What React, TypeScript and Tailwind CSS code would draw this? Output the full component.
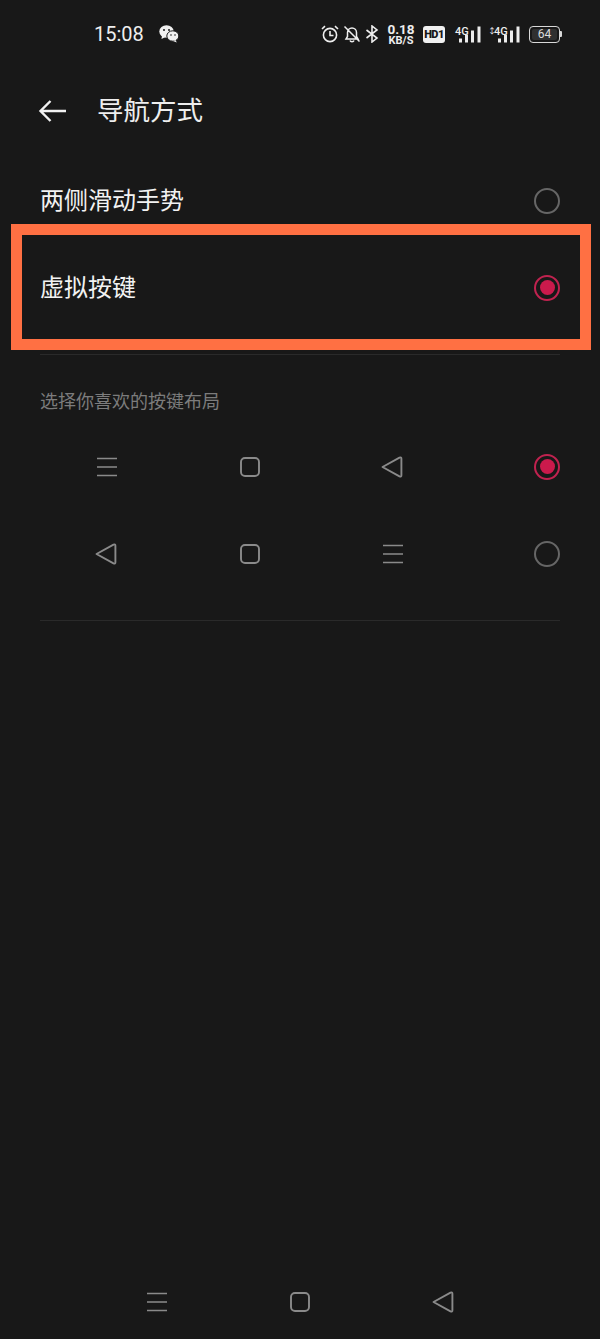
const MenuIcon = () => (
  <svg width="20" height="20" viewBox="0 0 20 20" fill="none" stroke="#8a8a8a" strokeWidth="1.7">
    <path d="M0 1.5H20M0 10H20M0 18.5H20" />
  </svg>
);
const SquareIcon = () => (
  <svg width="20" height="20" viewBox="0 0 20 20" fill="none" stroke="#8a8a8a" strokeWidth="1.9">
    <rect x="1" y="1" width="18" height="18" rx="4" />
  </svg>
);
const BackIcon = ({ className = "" }: { className?: string }) => (
  <svg className={className} width="22" height="22" viewBox="0 0 22 22" fill="none" stroke="#8a8a8a" strokeWidth="1.9" strokeLinejoin="round">
    <path d="M1.5 11L18.5 1.6Q20.4 0.9 20.4 2.8V19.2Q20.4 21.1 18.5 20.4Z" />
  </svg>
);
const Radio = ({ on }: { on?: boolean }) =>
  on ? (
    <div className="flex h-[26px] w-[26px] shrink-0 items-center justify-center rounded-full border-[2.5px] border-[#c0224f]">
      <div className="h-[15px] w-[15px] rounded-full bg-[#cb1a4c]" />
    </div>
  ) : (
    <div className="h-[26px] w-[26px] shrink-0 rounded-full border-[2.5px] border-[#666666]" />
  );
const Bars = () => (
  <svg width="22" height="21" viewBox="0 0 22 21" fill="#ececec">
    <rect x="0" y="14.5" width="3" height="4" />
    <rect x="6" y="10.5" width="3" height="8" />
    <rect x="12" y="6.5" width="3" height="12" />
    <rect x="18.5" y="2.5" width="3" height="16" />
  </svg>
);

const ROW = "flex items-center pl-[40px] pr-[40px]";

export default function App() {
  return (
    <div className="relative flex h-[1339px] w-[600px] flex-col overflow-hidden bg-[#181818] font-['Noto_Sans_CJK_SC','Noto_Sans',sans-serif] text-white">
      {/* status bar */}
      <div className="flex h-[68px] items-center pl-[94px] pr-[38px] text-[#eeeeee]">
        <span className="font-['Roboto',sans-serif] text-[20px] leading-none">15:08</span>
        <svg className="ml-[15px]" width="20" height="18" viewBox="0 0 20 18" fill="#f0f0f0">
          <ellipse cx="7.5" cy="6.5" rx="7.2" ry="6.2" />
          <path d="M3 10.5L2.5 14L6.5 12Z" />
          <ellipse cx="13.8" cy="11" rx="6" ry="5.2" stroke="#181818" strokeWidth="1" />
          <path d="M16.5 15L17.8 17.5L14 16Z" />
          <circle cx="5" cy="5" r="1" fill="#181818" />
          <circle cx="10" cy="5" r="1" fill="#181818" />
          <circle cx="12" cy="10" r="0.8" fill="#181818" />
          <circle cx="16" cy="10" r="0.8" fill="#181818" />
        </svg>
        <div className="ml-auto flex items-center">
          <svg width="18" height="18" viewBox="0 0 18 18" fill="none" stroke="#eee" strokeWidth="1.6">
            <circle cx="9" cy="10" r="6.6" />
            <path d="M9 6V10.5H12.5M1 4L4 1.2M17 4L14 1.2" />
          </svg>
          <svg className="ml-[4px]" width="18" height="18" viewBox="0 0 18 18" fill="none" stroke="#eee" strokeWidth="1.5">
            <path d="M3 14H15L13.5 11.5V7.5C13.5 5 11.5 3 9 3C6.5 3 4.5 5 4.5 7.5V11.5ZM7 15.5C7.5 17 10.5 17 11 15.5M1.5 1.5L16.5 16.5" />
          </svg>
          <svg className="ml-[4px]" width="14" height="18" viewBox="0 0 14 18" fill="none" stroke="#eee" strokeWidth="1.6">
            <path d="M1.5 5L12 13L7 17V1L12 5L1.5 13" />
          </svg>
          <div className="ml-[9px] flex w-[26px] flex-col items-center font-['Roboto',sans-serif] font-bold leading-none">
            <span className="text-[13.5px] leading-[12px]">0.18</span>
            <span className="mt-[1px] text-[11px] leading-[10px]">KB/S</span>
          </div>
          <div className="ml-[9px] flex h-[17px] w-[22px] items-center justify-center rounded-[3px] bg-[#f0f0f0] font-['Roboto',sans-serif] text-[11px] font-black leading-none tracking-[-0.5px] text-[#181818]">
            HD1
          </div>
          <div className="relative ml-[10px] h-[21px] w-[26px]">
            <span className="absolute left-0 top-[2px] font-['Roboto',sans-serif] text-[11px] font-medium leading-none">4G</span>
            <div className="absolute right-0 top-0"><Bars /></div>
          </div>
          <div className="relative ml-[7px] h-[21px] w-[32px]">
            <span className="absolute left-0 top-[3px] text-[8px] leading-none">↕</span>
            <span className="absolute left-[6px] top-[2px] font-['Roboto',sans-serif] text-[11px] font-medium leading-none">4G</span>
            <div className="absolute right-0 top-0"><Bars /></div>
          </div>
          <div className="ml-[9px] flex items-center">
            <div className="flex h-[17px] w-[31px] items-center justify-center rounded-[4px] border-[1.5px] border-[#d8d8d8]">
              <div className="flex h-[11px] w-[25px] items-center justify-center rounded-[2px] bg-[#303030] font-['Roboto',sans-serif] text-[12px] leading-none text-[#dddddd]">
                64
              </div>
            </div>
            <div className="h-[6px] w-[2px] rounded-r-[1px] bg-[#d8d8d8]" />
          </div>
        </div>
      </div>

      {/* header */}
      <div className="flex h-[86px] items-center pl-[38px]">
        <svg width="29" height="24" viewBox="0 0 29 24" fill="none" stroke="#f2f2f2" strokeWidth="2.4">
          <path d="M28 12H3M12.5 2L2.5 12L12.5 22" />
        </svg>
        <span className="ml-[30px] pb-[3px] text-[26.5px] leading-none text-[#eeeeee]">导航方式</span>
      </div>

      {/* mode options */}
      <div className={`${ROW} mt-[3px] h-[87px] justify-between`}>
        <span className="pb-[3px] text-[24px] leading-none text-[#f2f2f2]">两侧滑动手势</span>
        <Radio />
      </div>
      <div className={`${ROW} h-[87px] justify-between`}>
        <span className="pb-[3px] text-[24px] leading-none text-[#f2f2f2]">虚拟按键</span>
        <Radio on />
      </div>

      <div className="mx-[40px] mt-[23px] h-px bg-[#2a2a2a]" />

      <div className="mt-[35px] pl-[40px] text-[18px] leading-[20px] text-[#7c7c7c]">选择你喜欢的按键布局</div>

      {/* layouts */}
      <div className={`${ROW} mt-[13px] h-[87px]`}>
        <div className="ml-[57px] flex items-center gap-[123px]">
          <MenuIcon />
          <SquareIcon />
          <BackIcon className="-ml-[2px]" />
        </div>
        <div className="ml-auto"><Radio on /></div>
      </div>
      <div className={`${ROW} h-[87px]`}>
        <div className="ml-[55px] flex items-center gap-[123px]">
          <BackIcon />
          <SquareIcon />
          <MenuIcon />
        </div>
        <div className="ml-auto"><Radio /></div>
      </div>

      <div className="mx-[40px] mt-[23px] h-px bg-[#2a2a2a]" />

      {/* navigation bar */}
      <div className="mt-auto flex h-[74px] items-center pl-[147px]">
        <div className="flex items-center gap-[123px]">
          <MenuIcon />
          <SquareIcon />
          <BackIcon className="-ml-[1px]" />
        </div>
      </div>

      {/* annotation frame */}
      <div className="absolute left-[11px] top-[224px] h-[126px] w-[580px] border-[11px] border-[#ff7043]" />
    </div>
  );
}
